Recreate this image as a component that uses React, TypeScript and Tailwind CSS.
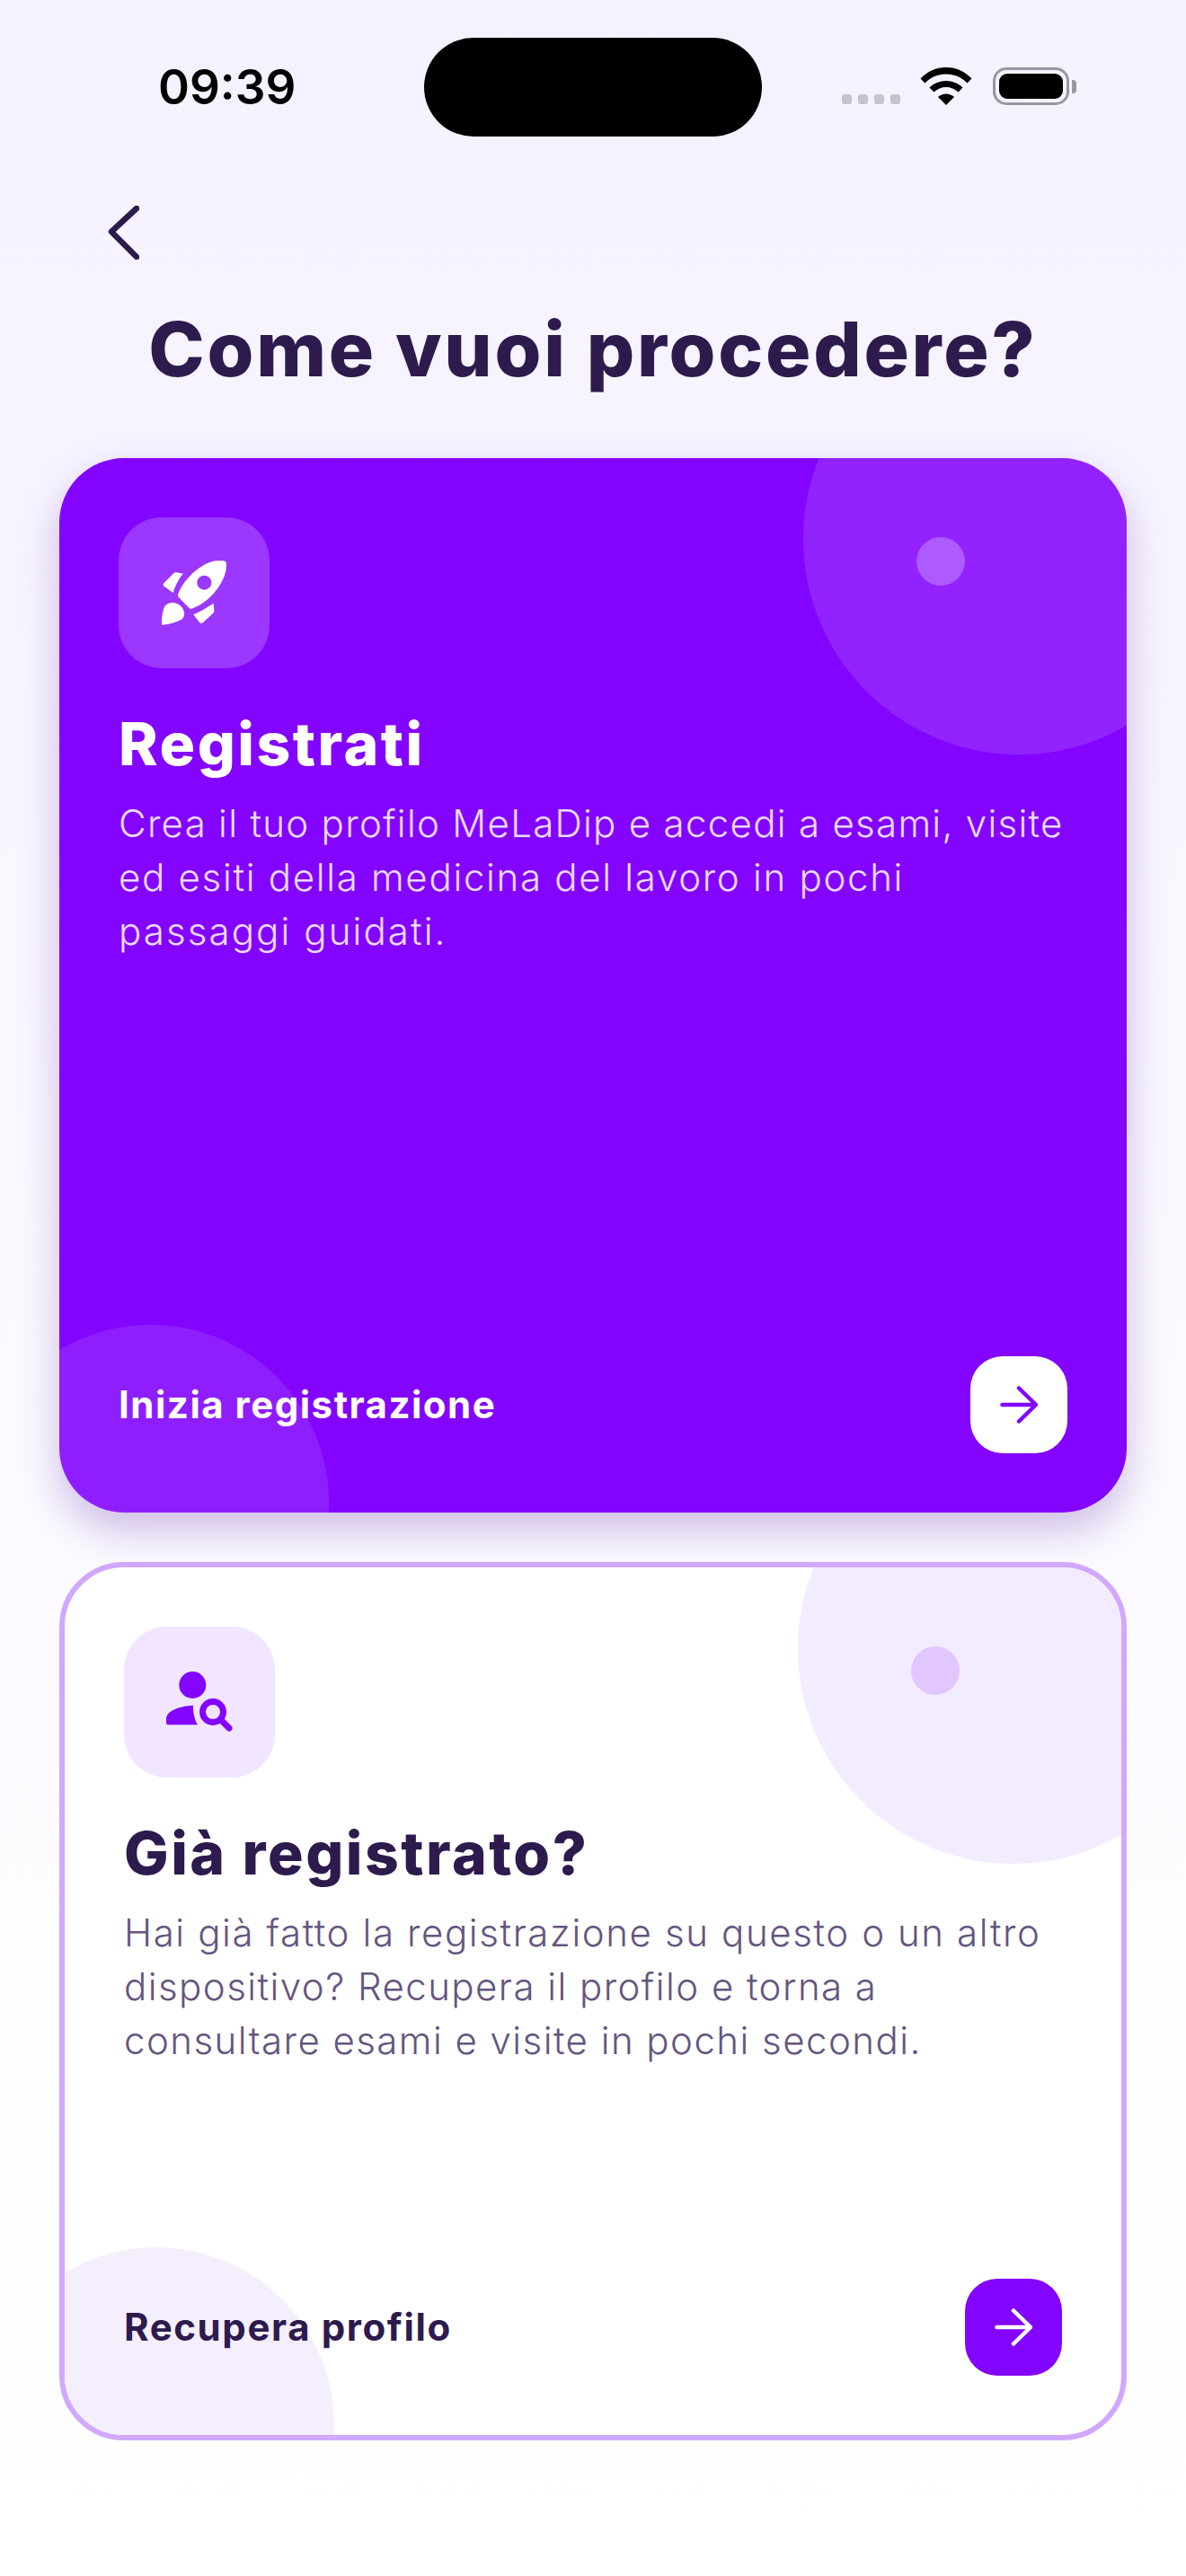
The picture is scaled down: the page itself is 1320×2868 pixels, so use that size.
import React from "react";

const font = { fontFamily: '"Inter", "Noto Sans", sans-serif' };

function Rocket() {
  return (
    <svg width="72" height="72" viewBox="0 0 72 72" fill="#fff">
      <path fillRule="evenodd" d="M71 1C72 2 72 4 71.700 9.300C70 24 55 46 33.300 53.700C32 54 31 53.500 30 52.500L19 41C18 40 17.700 38.500 18.300 37C26 18 47 1 61.700 .3C66 0 70 0 71 1ZM47.300 16.700A8 8 0 1 0 47.300 32.700A8 8 0 1 0 47.300 16.700Z" />
      <path d="M24 14.700L16.700 13.300C15 13 14 13.500 13 14.500L2.500 25C1 26.500 1.300 28.300 3 29L12.700 36C15 28 19 20 24 14.700Z" />
      <path d="M57.700 47.700L58.300 56C58.400 57 58 58 57 59L46 69C44.500 70.500 42.500 70 41.700 68.500L35.300 60.300C43 57 51 52 57.700 47.700Z" />
      <path d="M0 71.500C-.5 71.700 -.8 71 -.7 70C.5 62 1 55 3.300 51C6 47.500 9.500 46.500 13.300 47C19 48 24 52 25 57.700C25.500 61 24.500 64 21.700 66C16 69 8 71 1.500 71.800Z" />
    </svg>
  );
}

function PersonSearch() {
  return (
    <svg width="76" height="70" viewBox="0 0 76 70" fill="#8305ff">
      <circle cx="30.300" cy="16" r="15" />
      <path d="M31 38.700C17 39.500 1 44 1 54V58C1 59.500 2 60.300 3.500 60.300H36C33 56 30.500 46 31 38.700Z" />
      <circle cx="53" cy="46" r="11.500" fill="none" stroke="#8305ff" strokeWidth="7" />
      <path d="M62 55L71 64" fill="none" stroke="#8305ff" strokeWidth="7" strokeLinecap="round" />
    </svg>
  );
}

function Arrow({ color }: { color: string }) {
  return (
    <svg width="42" height="42" viewBox="0 0 42 42" fill="none" stroke={color} strokeWidth="4.500" strokeLinecap="round" strokeLinejoin="round">
      <path d="M2.500 21H40M21 2.500L40 21L21 39.500" />
    </svg>
  );
}

function Wifi() {
  return (
    <svg width="58" height="42" viewBox="0 0 58 42" fill="#000">
      <path d="M29 0C18 0 8 4.500 .5 12.500L5.500 17.500C11.500 11 20 7.500 29 7.500C38 7.500 46.500 11 52.500 17.500L57.500 12.500C50 4.500 40 0 29 0Z" />
      <path d="M29 15C22 15 15.500 17.800 10.500 22.500L15.500 27.500C19 24 24 22 29 22C34 22 39 24 42.500 27.500L47.500 22.500C42.500 17.800 36 15 29 15Z" />
      <path d="M29 29.500C25.500 29.500 22.500 30.800 20 33L29 42L38 33C35.500 30.800 32.500 29.500 29 29.500Z" />
    </svg>
  );
}

export default function App() {
  return (
    <div className="relative h-[2868px] w-[1320px] overflow-hidden bg-gradient-to-b from-[#f5f1ff] via-[#fbf9ff] to-[#ffffff]" style={font}>
      <div className="flex h-[194px] items-start pt-[42px]">
        <div className="w-[472px] pl-[176px] pt-[29px] text-[53px] leading-[52px] font-semibold text-black">09:39</div>
        <div className="h-[110px] w-[376px] rounded-[55px] bg-black" />
        <div className="flex items-end pl-[89px] pt-[33px]">
          <div className="mb-0 flex gap-[7px] pb-[1px]">
            <span className="h-[11px] w-[11px] rounded-[3px] bg-[#c5c3cd]" />
            <span className="h-[11px] w-[11px] rounded-[3px] bg-[#c5c3cd]" />
            <span className="h-[11px] w-[11px] rounded-[3px] bg-[#c5c3cd]" />
            <span className="h-[11px] w-[11px] rounded-[3px] bg-[#c5c3cd]" />
          </div>
          <div className="ml-[22px] flex"><Wifi /></div>
          <div className="ml-[23px] flex items-center">
            <div className="h-[42px] w-[85px] rounded-[15px] border-[3px] border-[#99969f] p-[4px]">
              <div className="h-full w-full rounded-[9px] bg-black" />
            </div>
            <div className="ml-[3px] h-[15px] w-[5px] rounded-r-[4px] bg-[#99969f]" />
          </div>
        </div>
      </div>

      <div className="flex h-[122px] items-start pl-[119px] pt-[35px]">
        <svg width="36" height="60" viewBox="0 0 36 60" fill="none" stroke="#2d1b4e" strokeWidth="6.500" strokeLinecap="round" strokeLinejoin="round">
          <path d="M33 3L5 29L33 57" />
        </svg>
      </div>

      <h1 className="m-0 h-[194px] pt-[23px] text-center text-[84px] leading-[100px] font-extrabold tracking-[2.700px] text-[#2d1b4e]">Come vuoi procedere?</h1>

      <div className="mx-[66px] flex flex-col gap-[55px]">
        <section className="relative flex h-[1174px] flex-col rounded-[72px] bg-[#8305ff] shadow-[0_20px_45px_rgba(90,30,170,0.28)]">
          <div className="absolute inset-0 overflow-hidden rounded-[72px]">
            <div className="absolute -right-[120px] -top-[150px] h-[480px] w-[480px] rounded-full bg-white/12" />
            <div className="absolute right-[180px] top-[88px] h-[54px] w-[54px] rounded-full bg-white/25" />
            <div className="absolute -bottom-[187px] -left-[96px] h-[396px] w-[396px] rounded-full bg-white/10" />
          </div>
          <div className="relative flex h-full flex-col p-[66px]">
            <div className="flex h-[168px] w-[168px] items-center justify-center rounded-[48px] bg-white/20"><Rocket /></div>
            <h2 className="mt-[42px] text-[66px] leading-[84px] font-extrabold tracking-[2.500px] text-white">Registrati</h2>
            <p className="mt-[17px] text-[42px] leading-[60px] font-[350] text-white/85">
              <span className="block tracking-[1.300px]">Crea il tuo profilo MeLaDip e accedi a esami, visite</span>
              <span className="block tracking-[1.700px]">ed esiti della medicina del lavoro in pochi</span>
              <span className="block tracking-[2.100px]">passaggi guidati.</span>
            </p>
            <div className="mt-auto flex items-center justify-between">
              <span className="text-[42px] leading-[60px] font-bold tracking-[1.500px] text-white">Inizia registrazione</span>
              <div className="flex h-[108px] w-[108px] items-center justify-center rounded-[36px] bg-white"><Arrow color="#8305ff" /></div>
            </div>
          </div>
        </section>

        <section className="relative flex h-[978px] flex-col overflow-hidden rounded-[72px] border-[6px] border-[#d1a8ff] bg-white p-[66px]">
          <div className="absolute -right-[120px] -top-[150px] h-[480px] w-[480px] rounded-full bg-[#f3ebff]" />
          <div className="absolute right-[180px] top-[88px] h-[54px] w-[54px] rounded-full bg-[#e2c6ff]" />
          <div className="absolute -bottom-[187px] -left-[96px] h-[396px] w-[396px] rounded-full bg-[#f5effd]" />
          <div className="relative flex h-[168px] w-[168px] items-center justify-center rounded-[48px] bg-[#f2e5ff]"><PersonSearch /></div>
          <h2 className="relative mt-[42px] text-[66px] leading-[84px] font-extrabold tracking-[2.500px] text-[#2d1b4e]">Già registrato?</h2>
          <p className="relative mt-[17px] text-[42px] leading-[60px] font-[350] text-[#65557f]">
            <span className="block tracking-[1.600px]">Hai già fatto la registrazione su questo o un altro</span>
            <span className="block tracking-[1.450px]">dispositivo? Recupera il profilo e torna a</span>
            <span className="block tracking-[1.450px]">consultare esami e visite in pochi secondi.</span>
          </p>
          <div className="relative mt-auto flex items-center justify-between">
            <span className="text-[42px] leading-[60px] font-bold tracking-[1.600px] text-[#2d1b4e]">Recupera profilo</span>
            <div className="flex h-[108px] w-[108px] items-center justify-center rounded-[36px] bg-[#8305ff]"><Arrow color="#ffffff" /></div>
          </div>
        </section>
      </div>
    </div>
  );
}
